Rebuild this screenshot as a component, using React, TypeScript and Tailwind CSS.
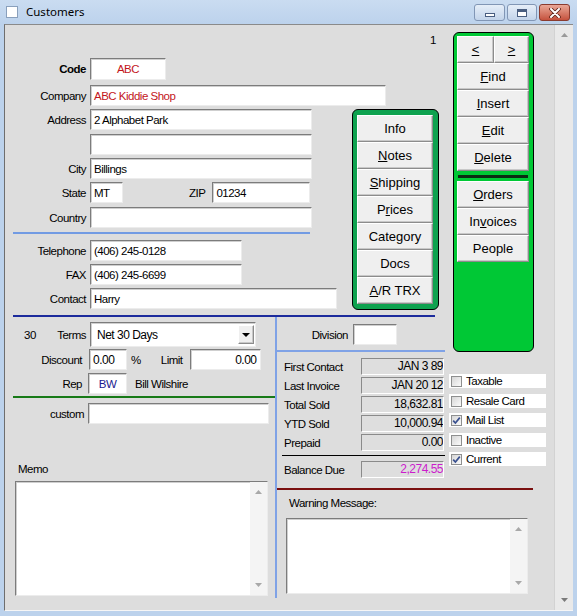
import React from "react";

const sunk =
  "bg-white border border-t-[#7c7c7c] border-l-[#7c7c7c] border-r-[#ececec] border-b-[#ececec] shadow-[inset_1px_1px_0_#cfcfcf]";
const raised =
  "bg-[#efefef] border border-t-white border-l-white border-r-[#8c8c8c] border-b-[#8c8c8c] shadow-[inset_-1px_-1px_0_#c8c8c8]";

function Input({ className = "", children }: { className?: string; children?: React.ReactNode }) {
  return (
    <div className={`${sunk} flex items-center px-[3px] overflow-hidden whitespace-nowrap ${className}`}>
      {children}
    </div>
  );
}

function Lbl({ className = "", children }: { className?: string; children?: React.ReactNode }) {
  return <span className={`shrink-0 text-right pr-[4px] ${className}`}>{children}</span>;
}

function Btn({ className = "", children }: { className?: string; children?: React.ReactNode }) {
  return (
    <div
      className={`${raised} h-[27px] flex items-center justify-center text-[13px] tracking-normal text-black ${className}`}
    >
      {children}
    </div>
  );
}

function Stat({ label, value, className = "" }: { label: string; value: string; className?: string }) {
  return (
    <div className="flex items-center h-[17px] mb-[2px]">
      <span className="w-[84px] pl-[7px] text-[11.5px]">{label}</span>
      <div
        className={`w-[83px] h-[17px] border border-t-[#8a8a8a] border-l-[#8a8a8a] border-r-white border-b-white bg-[#dedede] text-right text-[12px] tracking-[-0.5px] leading-[15px] overflow-hidden whitespace-nowrap ${className}`}
      >
        {value}
      </div>
    </div>
  );
}

function Check({ label, checked = false, className = "" }: { label: string; checked?: boolean; className?: string }) {
  return (
    <div className={`flex items-center w-[97px] h-[14px] bg-white ${className}`}>
      <span className="ml-[2px] w-[11px] h-[11px] border border-[#8e8f8f] bg-gradient-to-br from-[#d6d6d6] to-[#fbfbfb] flex items-center justify-center">
        {checked && (
          <svg width="9" height="9" viewBox="0 0 9 9">
            <path d="M1.2 4.6 L3.4 7 L7.8 1.6" stroke="#39508f" strokeWidth="1.7" fill="none" />
          </svg>
        )}
      </span>
      <span className="ml-[4px] text-[11.5px]">{label}</span>
    </div>
  );
}

function Arrows() {
  return (
    <div className="w-[17px] bg-[#f4f4f4] flex flex-col items-center justify-between py-[8px]">
      <svg width="7" height="4" viewBox="0 0 7 4">
        <path d="M0 4 L3.5 0 L7 4 Z" fill="#a8a8a8" />
      </svg>
      <svg width="7" height="4" viewBox="0 0 7 4">
        <path d="M0 0 L3.5 4 L7 0 Z" fill="#a8a8a8" />
      </svg>
    </div>
  );
}

function TitleBar() {
  return (
    <div className="h-[24px] shrink-0 flex items-center bg-gradient-to-b from-[#cadcf1] to-[#bcd2ec]">
      <div className="ml-[6px] w-[12px] h-[12px] bg-white border border-[#8aa0bc]" />
      <span className="ml-[8px] text-[11.5px] tracking-normal font-['Noto_Sans','Open_Sans',sans-serif] text-black">
        Customers
      </span>
      <div className="ml-auto mr-[7px] self-start mt-[4px] flex gap-[2px]">
        <div className="w-[31px] h-[17px] rounded-[3px] border border-[#8196b5] bg-gradient-to-b from-[#e6eef8] to-[#c3d4ea] flex items-end justify-center pb-[3px]">
          <div className="w-[10px] h-[4px] bg-white border border-[#4a5e80]" />
        </div>
        <div className="w-[30px] h-[17px] rounded-[3px] border border-[#8196b5] bg-gradient-to-b from-[#e6eef8] to-[#c3d4ea] flex items-center justify-center">
          <div className="w-[10px] h-[8px] bg-white border border-[#4a5e80] shadow-[inset_0_2px_0_#4a5e80,inset_0_0_0_1px_white]" />
        </div>
        <div className="w-[31px] h-[17px] rounded-[3px] border border-[#8a3b2f] bg-gradient-to-b from-[#e9a797] to-[#c4513d] flex items-center justify-center">
          <svg width="12" height="10" viewBox="0 0 12 10">
            <path d="M2 1 L10 9 M10 1 L2 9" stroke="#5a2016" strokeWidth="3.6" strokeLinecap="round" />
            <path d="M2 1 L10 9 M10 1 L2 9" stroke="white" strokeWidth="2" strokeLinecap="round" />
          </svg>
        </div>
      </div>
    </div>
  );
}

function LeftPanel() {
  return (
    <div className="w-[87px] h-[201px] shrink-0 rounded-[6px] border border-black bg-[#0ea24f] pl-[4px] pr-[5px] pt-[5px]">
      <Btn>Info</Btn>
      <Btn>
        <u>N</u>otes
      </Btn>
      <Btn>
        <u>S</u>hipping
      </Btn>
      <Btn>
        P<u>r</u>ices
      </Btn>
      <Btn>Category</Btn>
      <Btn>Docs</Btn>
      <Btn>
        <u>A</u>/R TRX
      </Btn>
    </div>
  );
}

function RightPanel() {
  return (
    <div className="mt-[7px] ml-[8px] w-[81px] h-[320px] rounded-[6px] border border-black bg-[#00c835] pl-[3px] pr-[4px] pt-[3px]">
      <div className="flex">
        <Btn className="w-[37px]">
          <u>&lt;</u>
        </Btn>
        <Btn className="flex-1">
          <u>&gt;</u>
        </Btn>
      </div>
      <Btn>
        <u>F</u>ind
      </Btn>
      <Btn>
        <u>I</u>nsert
      </Btn>
      <Btn>
        <u>E</u>dit
      </Btn>
      <Btn>
        <u>D</u>elete
      </Btn>
      <div className="mt-[4px] ml-[1px] w-[70px] h-[3px] bg-[#0b2a12]" />
      <Btn className="mt-[3px]">
        <u>O</u>rders
      </Btn>
      <Btn>
        In<u>v</u>oices
      </Btn>
      <Btn>People</Btn>
    </div>
  );
}

export default function App() {
  return (
    <div className="w-[577px] h-[616px] bg-[#bcd2ec] flex flex-col overflow-hidden text-black text-[11.5px] tracking-[-0.5px] leading-[14px] font-['Liberation_Sans',Arial,sans-serif]">
      <TitleBar />
      <div className="flex-1 flex pl-[4px] pr-[4px] pb-[5px] min-h-0">
        <div className="flex-1 flex bg-[#dddddd] border-t border-l border-b border-t-[#8a8a8a] border-l-[#6e6e6e] border-b-[#f6f6f6] min-h-0">
          {/* main column */}
          <div className="w-[440px] shrink-0 flex flex-col">
            <div className="h-[33px] flex justify-end pt-[8px] pr-[9px]">1</div>
            <div className="flex items-center h-[22px]">
              <Lbl className="w-[85px] font-bold">Code</Lbl>
              <Input className="w-[76px] h-[22px] justify-center text-[#c3161c]">ABC</Input>
            </div>
            <div className="flex items-center h-[21px] mt-[5px]">
              <Lbl className="w-[85px]">Company</Lbl>
              <Input className="w-[296px] h-[21px] text-[#c3161c]">ABC Kiddie Shop</Input>
            </div>
            <div className="flex mt-[3px]">
              <div className="w-[347px] shrink-0 flex flex-col">
                <div className="flex items-center h-[21px]">
                  <Lbl className="w-[85px]">Address</Lbl>
                  <Input className="w-[222px] h-[21px]">2 Alphabet Park</Input>
                </div>
                <div className="flex items-center h-[21px] mt-[4px]">
                  <Lbl className="w-[85px]" />
                  <Input className="w-[222px] h-[21px]" />
                </div>
                <div className="flex items-center h-[21px] mt-[3px]">
                  <Lbl className="w-[85px]">City</Lbl>
                  <Input className="w-[222px] h-[21px]">Billings</Input>
                </div>
                <div className="flex items-center h-[21px] mt-[3px]">
                  <Lbl className="w-[85px]">State</Lbl>
                  <Input className="w-[33px] h-[21px]">MT</Input>
                  <span className="ml-[66px]">ZIP</span>
                  <Input className="ml-[7px] w-[98px] h-[21px]">01234</Input>
                </div>
                <div className="flex items-center h-[21px] mt-[4px]">
                  <Lbl className="w-[85px]">Country</Lbl>
                  <Input className="w-[222px] h-[21px]" />
                </div>
                <div className="mt-[4px] ml-[8px] w-[297px] h-[2px] bg-[#729be3]" />
                <div className="flex items-center h-[21px] mt-[6px]">
                  <Lbl className="w-[85px]">Telephone</Lbl>
                  <Input className="w-[152px] h-[21px]">(406) 245-0128</Input>
                </div>
                <div className="flex items-center h-[21px] mt-[3px]">
                  <Lbl className="w-[85px]">FAX</Lbl>
                  <Input className="w-[152px] h-[21px]">(406) 245-6699</Input>
                </div>
                <div className="flex items-center h-[21px] mt-[3px]">
                  <Lbl className="w-[85px]">Contact</Lbl>
                  <Input className="w-[247px] h-[21px]">Harry</Input>
                </div>
              </div>
              <LeftPanel />
            </div>
            <div className="mt-[5px] ml-[8px] w-[422px] h-[2px] bg-[#1c2b9c]" />
            <div className="flex flex-1 min-h-0">
              {/* lower left */}
              <div className="w-[270px] shrink-0 flex flex-col">
                <div className="flex items-center h-[25px] mt-[5px]">
                  <span className="w-[85px] shrink-0 flex justify-between pl-[19px] pr-[4px]">
                    <span>30</span>
                    <span>Terms</span>
                  </span>
                  <div className={`${sunk} w-[166px] h-[25px] flex items-center pl-[6px] pr-[1px]`}>
                    <span className="flex-1 text-[12px]">Net 30 Days</span>
                    <div className={`${raised} w-[16px] h-[19px] flex items-center justify-center`}>
                      <svg width="8" height="4" viewBox="0 0 8 4">
                        <path d="M0 0 L8 0 L4 4 Z" fill="black" />
                      </svg>
                    </div>
                  </div>
                </div>
                <div className="flex items-center h-[21px] mt-[2px]">
                  <Lbl className="w-[84px] pr-[7px]">Discount</Lbl>
                  <Input className="w-[38px] h-[21px] text-[12px]">0.00</Input>
                  <span className="ml-[4px]">%</span>
                  <span className="ml-[20px]">Limit</span>
                  <Input className="ml-[7px] w-[71px] h-[21px] justify-end text-[12px]">0.00</Input>
                </div>
                <div className="flex items-center h-[21px] mt-[3px]">
                  <Lbl className="w-[83px] pr-[6px]">Rep</Lbl>
                  <Input className="w-[39px] h-[21px] justify-center text-[#1b1b8f]">BW</Input>
                  <span className="ml-[8px]">Bill Wilshire</span>
                </div>
                <div className="mt-[2px] ml-[8px] w-[262px] h-[2px] bg-[#177a17]" />
                <div className="flex items-center h-[21px] mt-[5px]">
                  <Lbl className="w-[83px]">custom</Lbl>
                  <Input className="w-[181px] h-[21px]" />
                </div>
                <div className="mt-[38px] pl-[13px]">Memo</div>
                <div className={`${sunk} mt-[5px] ml-[10px] w-[253px] h-[115px] flex justify-end px-0`}>
                  <Arrows />
                </div>
              </div>
              <div className="w-[2px] h-[281px] shrink-0 bg-[#7fa2e6]" />
              {/* lower right */}
              <div className="w-[168px] shrink-0 flex flex-col">
                <div className="flex items-center h-[21px] mt-[7px]">
                  <span className="w-[71px] text-right">Division</span>
                  <Input className="ml-[5px] w-[44px] h-[21px]" />
                </div>
                <div className="mt-[5px] w-[168px] h-[2px] bg-[#7fa2e6]" />
                <div className="mt-[6px] flex flex-col">
                  <Stat label="First Contact" value="JAN 3 89" />
                  <Stat label="Last Invoice" value="JAN 20 12" />
                  <Stat label="Total Sold" value="18,632.81" />
                  <Stat label="YTD Sold" value="10,000.94" />
                  <Stat label="Prepaid" value="0.00" />
                </div>
                <div className="mt-[2px] ml-[5px] w-[163px] h-[1px] bg-black" />
                <div className="mt-[5px]">
                  <Stat label="Balance Due" value="2,274.55" className="text-[#cc1ccc]" />
                </div>
                <div className="mt-[8px] w-[256px] h-[2px] shrink-0 bg-[#7a1010]" />
                <div className="mt-[6px] pl-[12px] whitespace-nowrap">Warning Message:</div>
                <div className={`${sunk} mt-[8px] ml-[9px] w-[242px] h-[76px] shrink-0 flex justify-end px-0`}>
                  <Arrows />
                </div>
              </div>
            </div>
          </div>
          {/* right column */}
          <div className="flex-1 flex flex-col">
            <RightPanel />
            <div className="mt-[22px] ml-[4px] flex flex-col">
              <Check label="Taxable" />
              <Check label="Resale Card" className="mt-[6px]" />
              <Check label="Mail List" checked className="mt-[5px]" />
              <Check label="Inactive" className="mt-[6px]" />
              <Check label="Current" checked className="mt-[5px]" />
            </div>
          </div>
          {/* scrollbar */}
          <div className="w-[19px] shrink-0 bg-[#e9e9e9] border-l border-[#d2d2d2] flex flex-col items-center justify-between pt-[8px] pb-[8px]">
            <svg width="7" height="4" viewBox="0 0 7 4">
              <path d="M0 4 L3.5 0 L7 4 Z" fill="#9a9a9a" />
            </svg>
            <svg width="7" height="4" viewBox="0 0 7 4">
              <path d="M0 0 L3.5 4 L7 0 Z" fill="#7a7a7a" />
            </svg>
          </div>
        </div>
      </div>
    </div>
  );
}
